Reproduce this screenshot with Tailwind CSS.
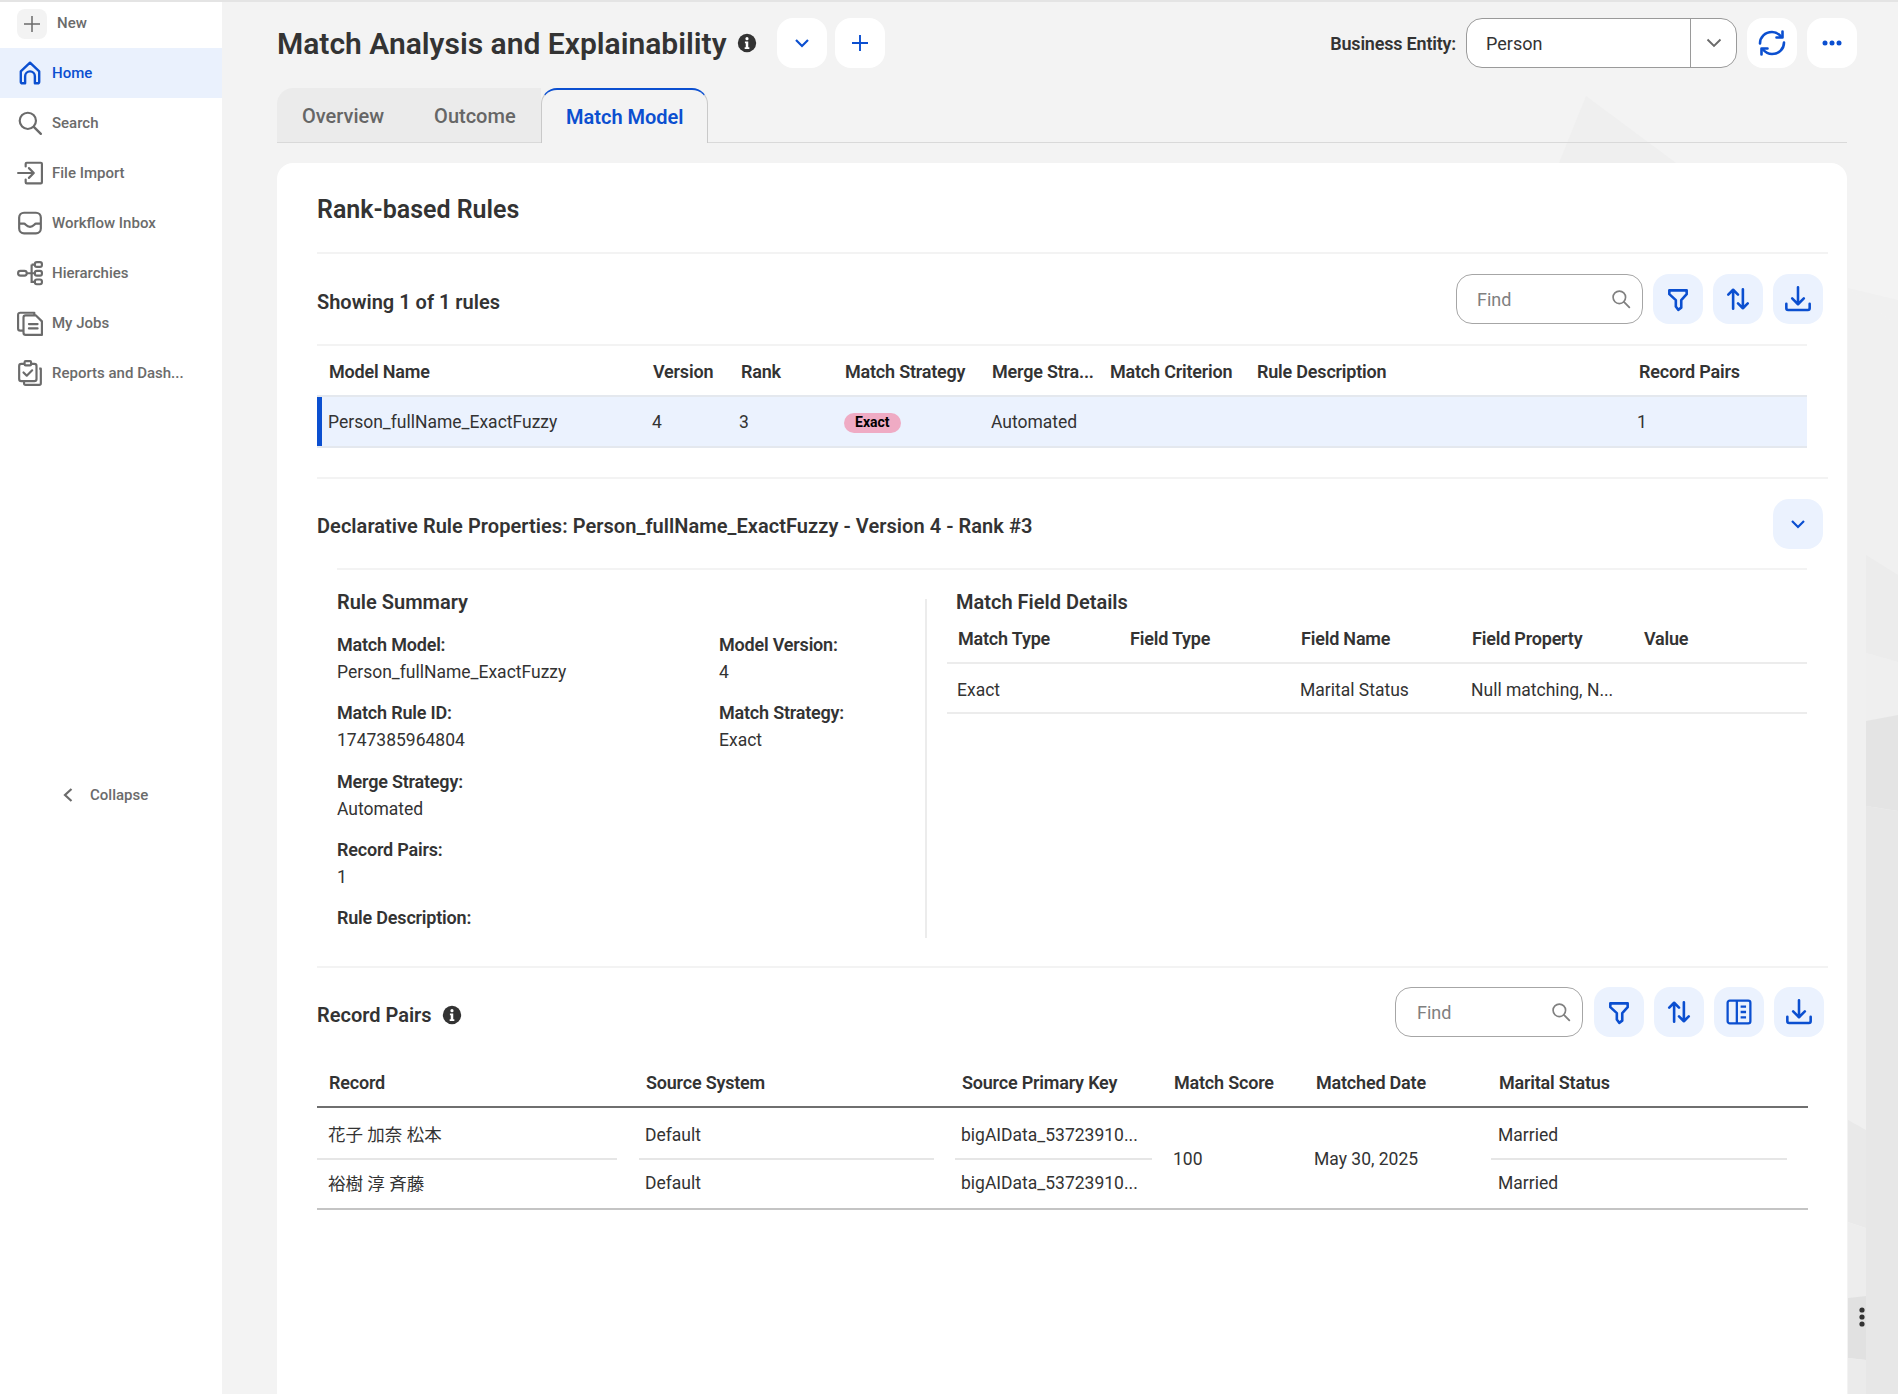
<!DOCTYPE html>
<html lang="en">
<head>
  <meta charset="UTF-8" />
  <meta name="viewport" content="width=device-width, initial-scale=1" />
  <title>Match Analysis and Explainability</title>
  <script src="https://cdn.jsdelivr.net/npm/@tailwindcss/browser@4"></script>
</head>
<body class="font-['Roboto','Noto_Sans_CJK_JP',sans-serif] text-[#333333]">
  <svg class="hidden">
    <symbol id="i-filter" viewBox="0 0 24 24"><path d="M4 4h16v3.500l-5 5.500v7l-2.800 2-2.200-3v-6L4 7.500z" fill="none" stroke="currentColor" stroke-width="2.400" stroke-linejoin="round"/></symbol>
    <symbol id="i-sort" viewBox="0 0 24 24"><path d="M7.500 21V3.500M3 8l4.500-4.500L12 8M16.500 3v17.500M12 16l4.500 4.500L21 16" fill="none" stroke="currentColor" stroke-width="2.400" stroke-linecap="round" stroke-linejoin="round"/></symbol>
    <symbol id="i-download" viewBox="0 0 24 24"><path d="M12 2v14M7 11.500l5 5 5-5M2 16v4a1.500 1.500 0 0 0 1.500 1.500h17A1.500 1.500 0 0 0 22 20v-4" fill="none" stroke="currentColor" stroke-width="2.200" stroke-linecap="round" stroke-linejoin="round"/></symbol>
    <symbol id="i-search" viewBox="0 0 24 24"><circle cx="10" cy="10" r="7.500" fill="none" stroke="currentColor" stroke-width="2"/><path d="m15.500 15.500 6.500 6.500" fill="none" stroke="currentColor" stroke-width="2.200" stroke-linecap="round"/></symbol>
    <symbol id="i-info" viewBox="0 0 24 24"><circle cx="12" cy="12" r="11" fill="currentColor"/><circle cx="12" cy="6.800" r="1.900" fill="#fff"/><path d="M9.500 10.200h4v7h1.300v2H9.200v-2h1.300v-5H9.500z" fill="#fff"/></symbol>
  </svg>

  <div class="relative flex w-[1898px] h-[1394px] overflow-hidden bg-[#f3f3f3]">
    <!-- bandeau du haut -->
    <div class="absolute top-0 left-0 right-0 h-[2px] bg-[#e4e4e4] z-10"></div>

    <!-- Sidebar -->
    <aside class="w-[222px] shrink-0 bg-white text-[#6b6b6b] text-[15px] font-medium flex flex-col">
      <div class="h-[48px] flex items-center pl-[17px] pb-[1px]">
        <span class="w-[30px] h-[30px] rounded-lg bg-[#f3f3f3] flex items-center justify-center">
          <svg class="w-[20px] h-[20px]" viewBox="0 0 20 20"><path d="M10 2v16M2 10h16" stroke="currentColor" stroke-width="1.500"/></svg>
        </span>
        <span class="ml-[10px]">New</span>
      </div>
      <a class="h-[50px] flex items-center pl-[17px] gap-[9px] bg-[#eaf1fd] text-[#0b4fd0]">
        <svg class="w-[26px] h-[26px]" viewBox="0 0 24 24"><path d="M5 21.500a1.500 1.500 0 0 1-1.500-1.500V10.500L12 2.500l8.500 8V20a1.500 1.500 0 0 1-1.500 1.500h-2.500V15a4.500 4.500 0 0 0-9 0v6.500z" fill="none" stroke="currentColor" stroke-width="2.200" stroke-linejoin="round"/></svg>
        Home
      </a>
      <a class="h-[50px] flex items-center pl-[17px] gap-[9px]">
        <svg class="w-[26px] h-[26px]"><use href="#i-search"/></svg>
        Search
      </a>
      <a class="h-[50px] flex items-center pl-[17px] gap-[9px]">
        <svg class="w-[26px] h-[26px]" viewBox="0 0 24 24"><path d="M1 12h14M11 7.500l4.500 4.500-4.500 4.500M8 6V3.500A1 1 0 0 1 9 2.500h13a1 1 0 0 1 1 1v17a1 1 0 0 1-1 1H9a1 1 0 0 1-1-1V18" fill="none" stroke="currentColor" stroke-width="2" stroke-linecap="round" stroke-linejoin="round"/></svg>
        File Import
      </a>
      <a class="h-[50px] flex items-center pl-[17px] gap-[9px]">
        <svg class="w-[26px] h-[26px]" viewBox="0 0 24 24"><rect x="2" y="2.500" width="20" height="19" rx="4.500" fill="none" stroke="currentColor" stroke-width="2"/><path d="M2 12.500h4.500c1.500 0 2 3 5.500 3s4-3 5.500-3H22" fill="none" stroke="currentColor" stroke-width="2"/></svg>
        Workflow Inbox
      </a>
      <a class="h-[50px] flex items-center pl-[17px] gap-[9px]">
        <svg class="w-[26px] h-[26px]" viewBox="0 0 24 24"><g fill="none" stroke="currentColor" stroke-width="2"><rect x="1" y="10" width="8" height="4.400" rx="2.200"/><rect x="16.500" y="2" width="6.500" height="4.400" rx="1.800"/><rect x="16.500" y="10" width="6.500" height="4.400" rx="1.800"/><rect x="16.500" y="18" width="6.500" height="4.400" rx="1.800"/><path d="M9 12.200h7.500M13.500 4.200v16h3M13.500 4.200h3"/></g></svg>
        Hierarchies
      </a>
      <a class="h-[50px] flex items-center pl-[17px] gap-[9px]">
        <svg class="w-[26px] h-[26px]" viewBox="0 0 24 24"><g fill="none" stroke="currentColor" stroke-width="2" stroke-linejoin="round"><path d="M16 5V2.500H3a2 2 0 0 0-2 2V17a2 2 0 0 0 2 2h3"/><path d="M8 5h9.500L23 10.500V23H8a2 2 0 0 1-2-2V7a2 2 0 0 1 2-2z"/><path d="M11 13h8M11 17h8" stroke-linecap="round"/></g></svg>
        My Jobs
      </a>
      <a class="h-[50px] flex items-center pl-[17px] gap-[9px]">
        <svg class="w-[26px] h-[26px]" viewBox="0 0 24 24"><g fill="none" stroke="currentColor" stroke-width="2" stroke-linejoin="round"><rect x="2" y="3.500" width="16" height="16" rx="2"/><rect x="7" y="1" width="6" height="4" rx="1" fill="#fff"/><path d="m6 11.500 3 3 5-5" stroke-linecap="round"/><path d="M20.500 8H22v13.500a1.500 1.500 0 0 1-1.500 1.500H8a1.500 1.500 0 0 1-1.500-1.500V20"/></g></svg>
        <span class="whitespace-nowrap">Reports and Dash...</span>
      </a>
      <div class="mt-[385px] h-[24px] flex items-center pl-[62px]">
        <svg class="w-[12px] h-[16px]" viewBox="0 0 12 16"><path d="M9.500 2 3 8l6.500 6" fill="none" stroke="currentColor" stroke-width="2.200"/></svg>
        <span class="ml-[16px]">Collapse</span>
      </div>
    </aside>

    <!-- Main -->
    <main class="relative flex-1 min-w-0 pl-[55px]">
      <!-- decor de fond -->
      <svg class="absolute top-0 left-0 w-[1676px] h-[1394px]" viewBox="222 0 1676 1394">
        <polygon points="1586,96 1559,163 1676,163" fill="#efefef"/>
        <polygon points="1848,288 1898,326 1898,1394 1848,1394" fill="#f0f0f0"/>
        <polygon points="1848,288 1898,300 1898,326" fill="#f0f0f0"/>
        <polygon points="1848,1120 1866,1130 1866,1228 1848,1222" fill="#e9e9e9"/>
        <polygon points="1848,1222 1866,1228 1866,1296 1848,1298" fill="#ededed"/>
        <polygon points="1848,1298 1866,1296 1866,1360 1848,1358" fill="#e1e1e1"/>
        <polygon points="1848,1358 1866,1360 1866,1394 1848,1394" fill="#ebebeb"/>
        <polygon points="1866,555 1898,575 1898,662 1866,653" fill="#ececec"/>
        <polygon points="1866,653 1898,662 1898,715 1866,721" fill="#efefef"/>
        <polygon points="1866,721 1898,715 1898,811 1866,806" fill="#e4e4e4"/>
        <polygon points="1866,806 1898,811 1898,1394 1866,1394" fill="#e7e7e7"/>
      </svg>

      <!-- header -->
      <div class="relative flex items-center h-[50px] mt-[18px] w-[1580px]">
        <h1 class="text-[30px] font-semibold leading-none mt-[2px] whitespace-nowrap">Match Analysis and Explainability</h1>
        <svg class="w-[20px] h-[20px] ml-[10px] text-[#333333]"><use href="#i-info"/></svg>
        <button class="w-[50px] h-[50px] ml-[20px] rounded-2xl bg-white flex items-center justify-center text-[#0b4fd0]">
          <svg class="w-[18px] h-[18px]" viewBox="0 0 18 18"><path d="m3 6 6 6 6-6" fill="none" stroke="currentColor" stroke-width="2.200"/></svg>
        </button>
        <button class="w-[50px] h-[50px] ml-[8px] rounded-2xl bg-white flex items-center justify-center text-[#0b4fd0]">
          <svg class="w-[20px] h-[20px]" viewBox="0 0 20 20"><path d="M10 2v16M2 10h16" stroke="currentColor" stroke-width="1.900"/></svg>
        </button>
        <div class="ml-auto flex items-center">
          <span class="text-[18px] font-semibold tracking-[-0.2px] whitespace-nowrap">Business Entity:</span>
          <div class="ml-[10px] w-[271px] h-[50px] rounded-2xl bg-white border border-[#9a9a9a] flex items-stretch overflow-hidden">
            <span class="flex-1 flex items-center pl-[19px] text-[18px]">Person</span>
            <span class="w-[46px] border-l border-[#9a9a9a] flex items-center justify-center text-[#6b6b6b]">
              <svg class="w-[18px] h-[18px]" viewBox="0 0 18 18"><path d="m2.500 5.500 6.500 6.500 6.500-6.500" fill="none" stroke="currentColor" stroke-width="1.900"/></svg>
            </span>
          </div>
          <button class="w-[50px] h-[50px] ml-[10px] rounded-2xl bg-white flex items-center justify-center text-[#0b4fd0]">
            <svg class="w-[28px] h-[28px]" viewBox="0 0 28 28"><g fill="none" stroke="currentColor" stroke-width="2.600" stroke-linecap="round" stroke-linejoin="round"><path d="M2 14.500C2 8 7 3 14 3c3.500 0 6.500 1.500 9 4.500"/><path d="M24.500 2.500v6h-6"/><path d="M26 13.500C26 20 21 25 14 25c-3.500 0-6.500-1.500-9-4.500"/><path d="M3.500 25.500v-6h6"/></g></svg>
          </button>
          <button class="w-[50px] h-[50px] ml-[10px] rounded-2xl bg-white flex items-center justify-center text-[#0b4fd0]">
            <svg class="w-[20px] h-[6px]" viewBox="0 0 20 6"><circle cx="3" cy="3" r="2.500" fill="currentColor"/><circle cx="10" cy="3" r="2.500" fill="currentColor"/><circle cx="17" cy="3" r="2.500" fill="currentColor"/></svg>
          </button>
        </div>
      </div>

      <!-- tabs -->
      <div class="relative flex items-stretch mt-[20px] h-[55px] w-[1570px] border-b border-[#d9d9d9] text-[20px]">
        <div class="w-[264px] bg-[#ebebeb] rounded-tl-2xl flex items-center pt-[2px] font-medium text-[#666666]">
          <span class="ml-[25px]">Overview</span>
          <span class="ml-[50px]">Outcome</span>
        </div>
        <div class="w-[167px] bg-[#f3f3f3] rounded-t-2xl border border-b-0 border-[#c9c9c9] border-t-2 border-t-[#0b4fd0] flex items-center pl-[24px] font-semibold text-[#0b4fd0] whitespace-nowrap -mb-[1px]">Match Model</div>
      </div>

      <!-- card -->
      <div class="relative mt-[20px] w-[1570px] h-[1300px] bg-white rounded-t-2xl pl-[40px]">
        <div class="h-[91px] w-[1511px] border-b-2 border-[#f3f3f3] flex items-center pt-[5px]">
          <h2 class="text-[25px] font-semibold">Rank-based Rules</h2>
        </div>

        <div class="h-[90px] w-[1506px] flex items-center">
          <h3 class="text-[20px] font-semibold mt-[6px]">Showing 1 of 1 rules</h3>
          <div class="ml-auto flex items-center gap-[10px]">
            <div class="w-[187px] h-[50px] rounded-2xl border border-[#a6a6a6] bg-white flex items-center justify-between pl-[20px] pr-[11px] text-[18px] text-[#808080]">
              Find
              <svg class="w-[20px] h-[20px]"><use href="#i-search"/></svg>
            </div>
            <button class="w-[50px] h-[50px] rounded-2xl bg-[#ebf2fe] flex items-center justify-center text-[#0b4fd0]"><svg class="w-[26px] h-[26px]"><use href="#i-filter"/></svg></button>
            <button class="w-[50px] h-[50px] rounded-2xl bg-[#ebf2fe] flex items-center justify-center text-[#0b4fd0]"><svg class="w-[26px] h-[26px]"><use href="#i-sort"/></svg></button>
            <button class="w-[50px] h-[50px] rounded-2xl bg-[#ebf2fe] flex items-center justify-center text-[#0b4fd0]"><svg class="w-[28px] h-[28px]"><use href="#i-download"/></svg></button>
          </div>
        </div>

        <!-- rules table -->
        <div class="w-[1490px] border-t-2 border-[#f3f3f3]">
          <div class="grid grid-cols-[324px_88px_104px_147px_118px_147px_382px_180px] h-[49px] items-center pt-[2px] text-[18px] font-semibold tracking-[-0.2px] whitespace-nowrap">
            <span class="pl-[12px]">Model Name</span>
            <span class="pl-[12px]">Version</span>
            <span class="pl-[12px]">Rank</span>
            <span class="pl-[12px]">Match Strategy</span>
            <span class="pl-[12px]">Merge Stra...</span>
            <span class="pl-[12px]">Match Criterion</span>
            <span class="pl-[12px]">Rule Description</span>
            <span class="pl-[12px]">Record Pairs</span>
          </div>
          <div class="grid grid-cols-[324px_88px_104px_147px_118px_147px_382px_180px] h-[53px] items-center pt-[2px] text-[17.5px] bg-[#ebf2fe] border-y-2 border-[#e4e8ee] shadow-[inset_5px_0_0_#0b4fd0]">
            <span class="pl-[11px]">Person_fullName_ExactFuzzy</span>
            <span class="pl-[11px]">4</span>
            <span class="pl-[10px]">3</span>
            <span class="pl-[11px] -mt-[2px]"><span class="inline-flex items-center h-[20px] px-[11px] rounded-full bg-[#efabc4] text-[14px] font-bold text-black">Exact</span></span>
            <span class="pl-[11px]">Automated</span>
            <span></span>
            <span></span>
            <span class="pl-[10px]">1</span>
          </div>
        </div>

        <!-- declarative rule -->
        <div class="mt-[29px] w-[1511px] border-t-2 border-[#f3f3f3] h-[91px] flex items-center pr-[5px]">
          <h3 class="text-[20px] font-semibold tracking-[0.05px] mt-[4px]">Declarative Rule Properties: Person_fullName_ExactFuzzy - Version 4 - Rank #3</h3>
          <button class="ml-auto w-[50px] h-[50px] rounded-2xl bg-[#ebf2fe] flex items-center justify-center text-[#0b4fd0]">
            <svg class="w-[18px] h-[18px]" viewBox="0 0 18 18"><path d="m3 6 6 6 6-6" fill="none" stroke="currentColor" stroke-width="2.200"/></svg>
          </button>
        </div>
        <div class="ml-[20px] w-[1470px] h-[398px] border-t-2 border-[#f3f3f3] flex items-start">
          <div class="w-[588px] pt-[20px]">
            <h4 class="h-[24px] leading-[24px] text-[20px] font-semibold">Rule Summary</h4>
            <div class="mt-[17px] grid grid-cols-[382px_1fr] auto-rows-[68.3px] text-[17.5px] leading-[27px]">
              <div><p class="text-[18px] font-semibold tracking-[-0.2px]">Match Model:</p><p class="mt-[1px]">Person_fullName_ExactFuzzy</p></div>
              <div><p class="text-[18px] font-semibold tracking-[-0.2px]">Model Version:</p><p class="mt-[1px]">4</p></div>
              <div><p class="text-[18px] font-semibold tracking-[-0.2px]">Match Rule ID:</p><p class="mt-[1px]">1747385964804</p></div>
              <div><p class="text-[18px] font-semibold tracking-[-0.2px]">Match Strategy:</p><p class="mt-[1px]">Exact</p></div>
              <div><p class="text-[18px] font-semibold tracking-[-0.2px]">Merge Strategy:</p><p class="mt-[1px]">Automated</p></div>
              <div></div>
              <div><p class="text-[18px] font-semibold tracking-[-0.2px]">Record Pairs:</p><p class="mt-[1px]">1</p></div>
              <div></div>
              <div><p class="text-[18px] font-semibold tracking-[-0.2px]">Rule Description:</p></div>
            </div>
          </div>
          <div class="w-[2px] h-[339px] mt-[29px] bg-[#ececec]"></div>
          <div class="flex-1 pt-[20px] pl-[20px]">
            <h4 class="ml-[9px] h-[24px] leading-[24px] text-[20px] font-semibold">Match Field Details</h4>
            <div class="grid grid-cols-[171px_171px_171px_172px_1fr] h-[50px] items-center pt-[1px] border-b-2 border-[#ececec] text-[18px] font-semibold tracking-[-0.2px]">
              <span class="pl-[11px]">Match Type</span>
              <span class="pl-[12px]">Field Type</span>
              <span class="pl-[12px]">Field Name</span>
              <span class="pl-[12px]">Field Property</span>
              <span class="pl-[12px]">Value</span>
            </div>
            <div class="grid grid-cols-[171px_171px_171px_172px_1fr] h-[50px] items-center pt-[5px] border-b-2 border-[#ececec] text-[17.5px]">
              <span class="pl-[10px]">Exact</span>
              <span></span>
              <span class="pl-[11px]">Marital Status</span>
              <span class="pl-[11px] whitespace-nowrap">Null matching, N...</span>
              <span></span>
            </div>
          </div>
        </div>

        <!-- record pairs -->
        <div class="w-[1511px] border-t-2 border-[#f3f3f3] pt-[19px] h-[71px] flex items-start pr-[4px]">
          <h3 class="text-[20px] font-semibold mt-[16px] leading-[24px]">Record Pairs</h3>
          <svg class="w-[20px] h-[20px] ml-[10px] mt-[18px] text-[#333333]"><use href="#i-info"/></svg>
          <div class="ml-auto flex items-center gap-[10px]">
            <div class="mr-[1px] w-[188px] h-[50px] rounded-2xl border border-[#a6a6a6] bg-white flex items-center justify-between pl-[21px] pr-[11px] text-[18px] text-[#808080]">
              Find
              <svg class="w-[20px] h-[20px]"><use href="#i-search"/></svg>
            </div>
            <button class="w-[50px] h-[50px] rounded-2xl bg-[#ebf2fe] flex items-center justify-center text-[#0b4fd0]"><svg class="w-[26px] h-[26px]"><use href="#i-filter"/></svg></button>
            <button class="w-[50px] h-[50px] rounded-2xl bg-[#ebf2fe] flex items-center justify-center text-[#0b4fd0]"><svg class="w-[26px] h-[26px]"><use href="#i-sort"/></svg></button>
            <button class="w-[50px] h-[50px] rounded-2xl bg-[#ebf2fe] flex items-center justify-center text-[#0b4fd0]">
              <svg class="w-[26px] h-[26px]" viewBox="0 0 24 24"><g fill="none" stroke="currentColor" stroke-width="2.100" stroke-linejoin="round"><rect x="1.500" y="1.500" width="21" height="21" rx="2"/><path d="M10 1.500v21M13.500 7h5M13.500 12h5M13.500 17h5"/></g></svg>
            </button>
            <button class="w-[50px] h-[50px] rounded-2xl bg-[#ebf2fe] flex items-center justify-center text-[#0b4fd0]"><svg class="w-[28px] h-[28px]"><use href="#i-download"/></svg></button>
          </div>
        </div>

        <div class="w-[1491px]">
          <div class="grid grid-cols-[317px_316px_212px_142px_183px_1fr] h-[71px] pt-[22px] items-center border-b-2 border-[#6f6f6f] text-[18px] font-semibold tracking-[-0.2px]">
            <span class="pl-[12px]">Record</span>
            <span class="pl-[12px]">Source System</span>
            <span class="pl-[12px]">Source Primary Key</span>
            <span class="pl-[12px]">Match Score</span>
            <span class="pl-[12px]">Matched Date</span>
            <span class="pl-[12px]">Marital Status</span>
          </div>
          <div class="grid grid-cols-[317px_316px_212px_142px_183px_1fr] grid-rows-[52px_48px] border-b-2 border-[#c4c4c4] text-[17.5px]">
            <div class="mr-[17px] border-b-2 border-[#e6e6e6] pl-[11px] flex items-center pt-[5px]">花子 加奈 松本</div>
            <div class="ml-[5px] mr-[16px] border-b-2 border-[#e6e6e6] pl-[6px] flex items-center pt-[5px]">Default</div>
            <div class="ml-[5px] mr-[10px] border-b-2 border-[#e6e6e6] pl-[6px] flex items-center pt-[5px] whitespace-nowrap">bigAIData_53723910...</div>
            <div class="row-span-2 pl-[11px] flex items-center pt-[3px]">100</div>
            <div class="row-span-2 pl-[10px] flex items-center pt-[2px]">May 30, 2025</div>
            <div class="ml-[4px] mr-[21px] border-b-2 border-[#e6e6e6] pl-[7px] flex items-center pt-[5px]">Married</div>
            <div class="pl-[11px] flex items-center">裕樹 淳 斉藤</div>
            <div class="ml-[5px] pl-[6px] flex items-center pb-[2px]">Default</div>
            <div class="ml-[5px] pl-[6px] flex items-center pb-[2px] whitespace-nowrap">bigAIData_53723910...</div>
            <div class="ml-[4px] pl-[7px] flex items-center pb-[2px]">Married</div>
          </div>
        </div>
      </div>

      <!-- poignee -->
      <svg class="absolute left-[1637px] top-[1307px] w-[6px] h-[20px]" viewBox="0 0 6 20"><circle cx="3" cy="3" r="2.600" fill="#333"/><circle cx="3" cy="10" r="2.600" fill="#333"/><circle cx="3" cy="17" r="2.600" fill="#333"/></svg>
    </main>
  </div>
</body>
</html>
